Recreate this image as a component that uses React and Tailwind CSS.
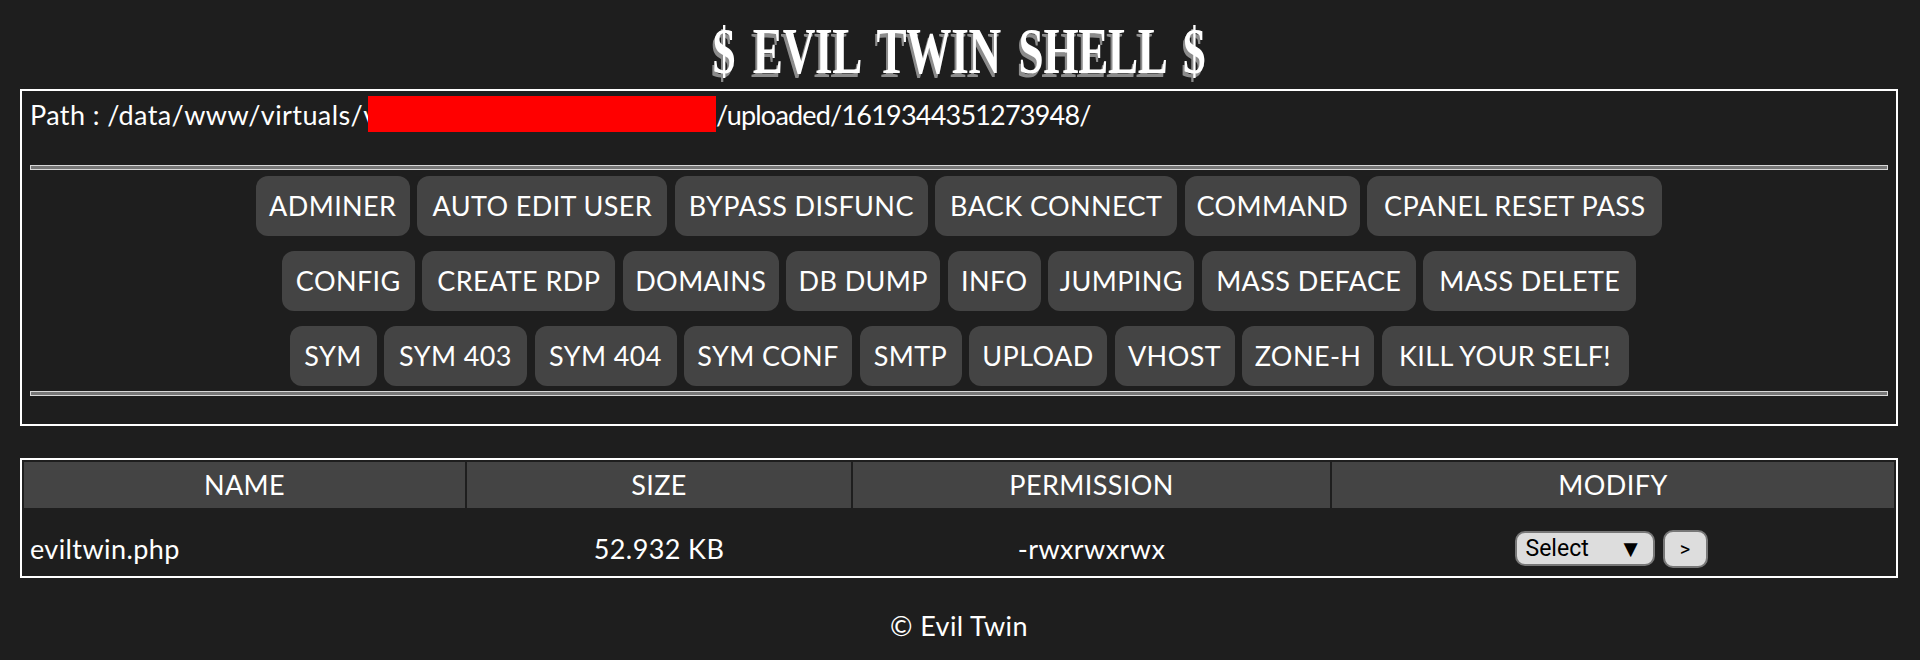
const rows = [
  [
    ["ADMINER", "w-[154px]"],
    ["AUTO EDIT USER", "w-[250px]"],
    ["BYPASS DISFUNC", "w-[253px]"],
    ["BACK CONNECT", "w-[242px]"],
    ["COMMAND", "w-[175px]"],
    ["CPANEL RESET PASS", "w-[295px]"],
  ],
  [
    ["CONFIG", "w-[133px]"],
    ["CREATE RDP", "w-[193px]"],
    ["DOMAINS", "w-[156px]"],
    ["DB DUMP", "w-[154px]"],
    ["INFO", "w-[93px]"],
    ["JUMPING", "w-[146px]"],
    ["MASS DEFACE", "w-[214px]"],
    ["MASS DELETE", "w-[213px]"],
  ],
  [
    ["SYM", "w-[87px]"],
    ["SYM 403", "w-[143px]"],
    ["SYM 404", "w-[142px]"],
    ["SYM CONF", "w-[168px]"],
    ["SMTP", "w-[102px]"],
    ["UPLOAD", "w-[138px]"],
    ["VHOST", "w-[120px]"],
    ["ZONE-H", "w-[132px]"],
    ["KILL YOUR SELF!", "w-[247px]"],
  ],
];

function Rule() {
  return <hr className="h-[5px] border border-[#d8d8d8] bg-[#777777]" />;
}

export default function App() {
  return (
    <div className="min-h-[660px] bg-[#1e1e1e] pl-5 pr-[22px] pt-[19px] text-white font-['Lato',sans-serif] text-[27px] leading-[36px] tracking-[0.4px]">
      <h1 className="h-[70px] scale-x-[0.685] text-center font-['Liberation_Serif',serif] text-[66px] leading-[64px] font-bold tracking-[-0.5px] [word-spacing:10px] [text-shadow:-3px_4px_0_#8c8c8c]">
        $ EVIL TWIN SHELL $
      </h1>
      <div className="h-[337px] border-2 border-white px-2 pt-[5px]">
        <div className="flex h-[36px] items-center whitespace-nowrap">
          <span className="w-[338px] overflow-hidden pt-[2px]">Path : /data/www/virtuals/v</span>
          <span className="h-[36px] w-[348px] bg-[#ff0000]" />
          <span className="pt-[2px] tracking-[-0.8px]">/uploaded/1619344351273948/</span>
        </div>
        <div className="mt-[33px]">
          <Rule />
        </div>
        <div className="mt-[6px] flex flex-col gap-[15px]">
          {rows.map((row, i) => (
            <div key={i} className="flex justify-center gap-[7.5px]">
              {row.map(([label, width]) => (
                <a
                  key={label}
                  className={`flex h-[60px] items-center justify-center whitespace-nowrap rounded-xl bg-[#444444] ${width}`}
                >
                  {label}
                </a>
              ))}
            </div>
          ))}
        </div>
        <div className="mt-[5px]">
          <Rule />
        </div>
      </div>
      <table className="mt-8 w-full table-fixed border-separate border-spacing-[2px] border-2 border-white">
        <colgroup>
          <col className="w-[441px]" />
          <col className="w-[384px]" />
          <col className="w-[477px]" />
          <col />
        </colgroup>
        <thead>
          <tr>
            {["NAME", "SIZE", "PERMISSION", "MODIFY"].map((h) => (
              <th key={h} className="h-[46px] bg-[#444444] p-0 text-center font-normal">
                {h}
              </th>
            ))}
          </tr>
        </thead>
        <tbody>
          <tr>
            <td className="h-[64px] px-[6px] pt-[14px]">eviltwin.php</td>
            <td className="pt-[14px] text-center">52.932 KB</td>
            <td className="pt-[14px] text-center">-rwxrwxrwx</td>
            <td className="pt-[13px] pr-[4px]">
              <div className="flex items-center justify-center gap-2 font-['Roboto',sans-serif] tracking-normal text-black">
                <div className="flex h-[35px] w-[140px] items-center justify-between rounded-[10px] border-2 border-[#777777] bg-[#dddddd] pl-[9px] pr-[10px] text-[23px] leading-none">
                  <span>Select</span>
                  <span className="text-[24px]">▼</span>
                </div>
                <button className="h-[38px] w-[45px] rounded-[10px] border-2 border-[#777777] bg-[#dddddd] text-[20px] leading-none">
                  &gt;
                </button>
              </div>
            </td>
          </tr>
        </tbody>
      </table>
      <footer className="mt-[30px] text-center">© Evil Twin</footer>
    </div>
  );
}
